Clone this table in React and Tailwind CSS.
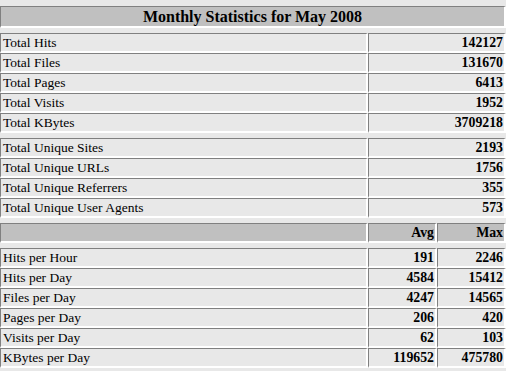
import React from 'react';

const totals = [
  ['Total Hits', '142127'],
  ['Total Files', '131670'],
  ['Total Pages', '6413'],
  ['Total Visits', '1952'],
  ['Total KBytes', '3709218'],
];

const uniques = [
  ['Total Unique Sites', '2193'],
  ['Total Unique URLs', '1756'],
  ['Total Unique Referrers', '355'],
  ['Total Unique User Agents', '573'],
];

const averages = [
  ['Hits per Hour', '191', '2246'],
  ['Hits per Day', '4584', '15412'],
  ['Files per Day', '4247', '14565'],
  ['Pages per Day', '206', '420'],
  ['Visits per Day', '62', '103'],
  ['KBytes per Day', '119652', '475780'],
];

// inset cell border like an old <table border> cell
const cell = 'border-t border-l border-t-[#808080] border-l-[#808080] border-b-2 border-r-2 border-b-white border-r-white';

function Row({ label, values, head }) {
  const bg = head ? 'bg-[#c0c0c0]' : 'bg-[#e8e8e8]';
  const num = `${cell} ${bg} pr-[1px] pt-[1px] text-right text-[13.8px] leading-[16px] font-bold`;
  return (
    <div className="flex h-[20px]">
      <div className={`${cell} ${bg} w-[368px] pl-[2px] pt-[1px] text-[13.5px] leading-[16px]`}>{label}</div>
      {values.length === 1 ? (
        <div className={`${num} w-[138px]`}>{values[0]}</div>
      ) : (
        values.map((v, i) => (
          <div key={i} className={`${num} w-[69px]`}>{v}</div>
        ))
      )}
    </div>
  );
}

export default function App() {
  return (
    <div
      className="w-[506px] h-[371px] bg-[#e8e8e8] text-black pt-[6px] overflow-hidden"
      style={{ fontFamily: '"Liberation Serif", "Times New Roman", serif' }}
    >
      <div className={`${cell} bg-[#c0c0c0] h-[22px] pt-[1px] text-center text-[16px] leading-[18px] font-bold`}>
        Monthly Statistics for May 2008
      </div>
      <div className="h-[5px]" />
      {totals.map(([l, v]) => (
        <Row key={l} label={l} values={[v]} />
      ))}
      <div className="h-[5px]" />
      {uniques.map(([l, v]) => (
        <Row key={l} label={l} values={[v]} />
      ))}
      <div className="h-[5px]" />
      <Row head label="" values={['Avg', 'Max']} />
      <div className="h-[5px]" />
      {averages.map(([l, a, m]) => (
        <Row key={l} label={l} values={[a, m]} />
      ))}
    </div>
  );
}
